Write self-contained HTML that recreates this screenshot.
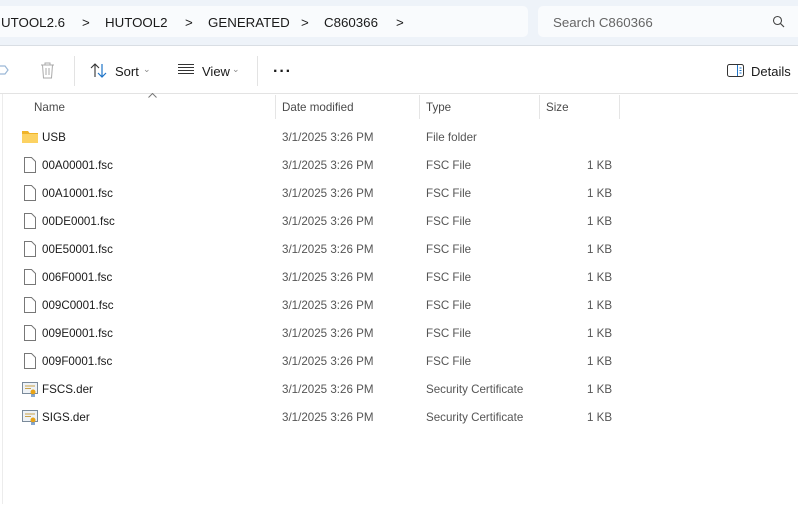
<!DOCTYPE html>
<html><head><meta charset="utf-8"><style>
*{margin:0;padding:0;box-sizing:border-box}
body{width:798px;height:507px;overflow:hidden;background:#fff;font-family:"Liberation Sans",sans-serif;font-size:11.6px;color:#1a1a1a;position:relative}
.top{position:absolute;left:0;top:0;width:798px;height:46px;background:#eef3f9;border-bottom:1px solid #d9dee4}
.bc{position:absolute;left:-10px;top:6px;width:538px;height:31px;background:#f9fbfd;border-radius:5px}
.sr{position:absolute;left:538px;top:6px;width:270px;height:31px;background:#f9fbfd;border-radius:5px}
.t{position:absolute;white-space:nowrap}
.tb{position:absolute;left:0;top:47px;width:798px;height:47px;border-bottom:1px solid #e3e3e3}
.vl{position:absolute;width:1px;background:#e5e5e5}
.row{position:absolute;left:0;height:28px;width:798px}
.row .t{top:8px}
.row svg{margin-top:1px}
.hdr{color:#4a4a4a}
.gray{color:#555}
.bt{font-size:13.3px;top:15px}
</style></head><body>
<div class="top">
 <div class="bc"></div>
 <div class="sr"></div>
 <div class="t bt" style="left:1px">UTOOL2.6</div>
 <div class="t bt" style="left:82px">&gt;</div>
 <div class="t bt" style="left:105px">HUTOOL2</div>
 <div class="t bt" style="left:185px">&gt;</div>
 <div class="t bt" style="left:208px">GENERATED</div>
 <div class="t bt" style="left:301px">&gt;</div>
 <div class="t bt" style="left:324px">C860366</div>
 <div class="t bt" style="left:396px">&gt;</div>
 <div class="t bt" style="left:553px;color:#666">Search C860366</div>
 <svg style="position:absolute;left:772px;top:15px" width="13" height="13" viewBox="0 0 13 13"><circle cx="5.5" cy="5.5" r="4" fill="none" stroke="#444" stroke-width="1.1"/><path d="M8.5 8.5L12 12" stroke="#444" stroke-width="1.2"/></svg>
</div>
<div class="tb">
 <svg style="position:absolute;left:0;top:15px" width="10" height="16"><path d="M0 4h5l3 4-3 4H0" fill="none" stroke="#9bb8d6" stroke-width="1.2"/></svg>
 <svg style="position:absolute;left:40px;top:15px" width="15" height="17" viewBox="0 0 15 17"><path d="M1 3h13M5 3V1h5v2M2.5 3l1 13h8l1-13M6 6v7M9 6v7" fill="none" stroke="#aaa" stroke-width="1"/></svg>
 <div class="vl" style="left:74px;top:9px;height:30px;background:#e3e3e3"></div>
 <svg style="position:absolute;left:90px;top:16px" width="18" height="15" viewBox="0 0 18 15"><path d="M5 14V1M1 5l4-4 4 4" fill="none" stroke="#333" stroke-width="1.1"/><path d="M12 1v13M8 10l4 4 4-4" fill="none" stroke="#1e74c8" stroke-width="1.2"/></svg>
 <div class="t" style="left:115px;top:17px;font-size:13px">Sort</div>
 <div class="t" style="left:143px;top:17px;font-size:9px;color:#888">⌄</div>
 <svg style="position:absolute;left:178px;top:17px" width="16" height="11"><path d="M0 .5h16M0 3.5h16M0 6.5h16M0 9.5h16" stroke="#333" stroke-width="1"/></svg>
 <div class="t" style="left:202px;top:17px;font-size:13px">View</div>
 <div class="t" style="left:232px;top:17px;font-size:9px;color:#888">⌄</div>
 <div class="vl" style="left:257px;top:9px;height:30px;background:#e3e3e3"></div>
 <div class="t" style="left:273px;top:16px;font-size:16px;font-weight:bold;letter-spacing:1px">···</div>
 <svg style="position:absolute;left:727px;top:17px" width="17" height="13" viewBox="0 0 17 13"><rect x=".5" y=".5" width="16" height="12" rx="2" fill="none" stroke="#333"/><path d="M10.5 1v11M12.5 4h2M12.5 6.5h2M12.5 9h2" stroke="#1e74c8" stroke-width="1"/></svg>
 <div class="t" style="left:751px;top:17px;font-size:13px">Details</div>
</div>
<div class="vl" style="left:2px;top:94px;height:410px;background:#ececec"></div>
<svg style="position:absolute;left:148px;top:93px" width="9" height="5"><path d="M.5 4.5L4.5 .5l4 4" fill="none" stroke="#777"/></svg>
<div class="t hdr" style="left:34px;top:101px">Name</div>
<div class="t hdr" style="left:282px;top:101px">Date modified</div>
<div class="t hdr" style="left:426px;top:101px">Type</div>
<div class="t hdr" style="left:546px;top:101px">Size</div>
<div class="vl" style="left:275px;top:95px;height:24px"></div>
<div class="vl" style="left:419px;top:95px;height:24px"></div>
<div class="vl" style="left:539px;top:95px;height:24px"></div>
<div class="vl" style="left:619px;top:95px;height:24px"></div>

<div class="row" style="top:123px">
 <svg style="position:absolute;left:22px;top:6px" width="16" height="13"><path d="M0 1h6l1.5 2H16v10H0z" fill="#f0b429"/><rect y="4" width="16" height="9" fill="#fcd262"/></svg>
 <div class="t" style="left:42px">USB</div><div class="t gray" style="left:282px">3/1/2025 3:26 PM</div><div class="t gray" style="left:426px">File folder</div>
</div>
<div class="row" style="top:151px"><svg style="position:absolute;left:24px;top:5px" width="12" height="16"><path d="M.5.5h7l4 4v11H.5z" fill="#fff" stroke="#777"/></svg><div class="t" style="left:42px">00A00001.fsc</div><div class="t gray" style="left:282px">3/1/2025 3:26 PM</div><div class="t gray" style="left:426px">FSC File</div><div class="t gray" style="left:587px">1 KB</div></div>
<div class="row" style="top:179px"><svg style="position:absolute;left:24px;top:5px" width="12" height="16"><path d="M.5.5h7l4 4v11H.5z" fill="#fff" stroke="#777"/></svg><div class="t" style="left:42px">00A10001.fsc</div><div class="t gray" style="left:282px">3/1/2025 3:26 PM</div><div class="t gray" style="left:426px">FSC File</div><div class="t gray" style="left:587px">1 KB</div></div>
<div class="row" style="top:207px"><svg style="position:absolute;left:24px;top:5px" width="12" height="16"><path d="M.5.5h7l4 4v11H.5z" fill="#fff" stroke="#777"/></svg><div class="t" style="left:42px">00DE0001.fsc</div><div class="t gray" style="left:282px">3/1/2025 3:26 PM</div><div class="t gray" style="left:426px">FSC File</div><div class="t gray" style="left:587px">1 KB</div></div>
<div class="row" style="top:235px"><svg style="position:absolute;left:24px;top:5px" width="12" height="16"><path d="M.5.5h7l4 4v11H.5z" fill="#fff" stroke="#777"/></svg><div class="t" style="left:42px">00E50001.fsc</div><div class="t gray" style="left:282px">3/1/2025 3:26 PM</div><div class="t gray" style="left:426px">FSC File</div><div class="t gray" style="left:587px">1 KB</div></div>
<div class="row" style="top:263px"><svg style="position:absolute;left:24px;top:5px" width="12" height="16"><path d="M.5.5h7l4 4v11H.5z" fill="#fff" stroke="#777"/></svg><div class="t" style="left:42px">006F0001.fsc</div><div class="t gray" style="left:282px">3/1/2025 3:26 PM</div><div class="t gray" style="left:426px">FSC File</div><div class="t gray" style="left:587px">1 KB</div></div>
<div class="row" style="top:291px"><svg style="position:absolute;left:24px;top:5px" width="12" height="16"><path d="M.5.5h7l4 4v11H.5z" fill="#fff" stroke="#777"/></svg><div class="t" style="left:42px">009C0001.fsc</div><div class="t gray" style="left:282px">3/1/2025 3:26 PM</div><div class="t gray" style="left:426px">FSC File</div><div class="t gray" style="left:587px">1 KB</div></div>
<div class="row" style="top:319px"><svg style="position:absolute;left:24px;top:5px" width="12" height="16"><path d="M.5.5h7l4 4v11H.5z" fill="#fff" stroke="#777"/></svg><div class="t" style="left:42px">009E0001.fsc</div><div class="t gray" style="left:282px">3/1/2025 3:26 PM</div><div class="t gray" style="left:426px">FSC File</div><div class="t gray" style="left:587px">1 KB</div></div>
<div class="row" style="top:347px"><svg style="position:absolute;left:24px;top:5px" width="12" height="16"><path d="M.5.5h7l4 4v11H.5z" fill="#fff" stroke="#777"/></svg><div class="t" style="left:42px">009F0001.fsc</div><div class="t gray" style="left:282px">3/1/2025 3:26 PM</div><div class="t gray" style="left:426px">FSC File</div><div class="t gray" style="left:587px">1 KB</div></div>
<div class="row" style="top:375px"><svg style="position:absolute;left:22px;top:6px" width="16" height="15"><rect x=".5" y=".5" width="15" height="11" fill="#eef2f6" stroke="#7a8a9a"/><path d="M3 4h10M3 6.5h6" stroke="#c9a24a"/><circle cx="11" cy="10" r="2.5" fill="#e8a317"/><path d="M10 12v3M12 12v3" stroke="#3a6fb0" stroke-width="1.2"/></svg><div class="t" style="left:42px">FSCS.der</div><div class="t gray" style="left:282px">3/1/2025 3:26 PM</div><div class="t gray" style="left:426px">Security Certificate</div><div class="t gray" style="left:587px">1 KB</div></div>
<div class="row" style="top:403px"><svg style="position:absolute;left:22px;top:6px" width="16" height="15"><rect x=".5" y=".5" width="15" height="11" fill="#eef2f6" stroke="#7a8a9a"/><path d="M3 4h10M3 6.5h6" stroke="#c9a24a"/><circle cx="11" cy="10" r="2.5" fill="#e8a317"/><path d="M10 12v3M12 12v3" stroke="#3a6fb0" stroke-width="1.2"/></svg><div class="t" style="left:42px">SIGS.der</div><div class="t gray" style="left:282px">3/1/2025 3:26 PM</div><div class="t gray" style="left:426px">Security Certificate</div><div class="t gray" style="left:587px">1 KB</div></div>
</body></html>
